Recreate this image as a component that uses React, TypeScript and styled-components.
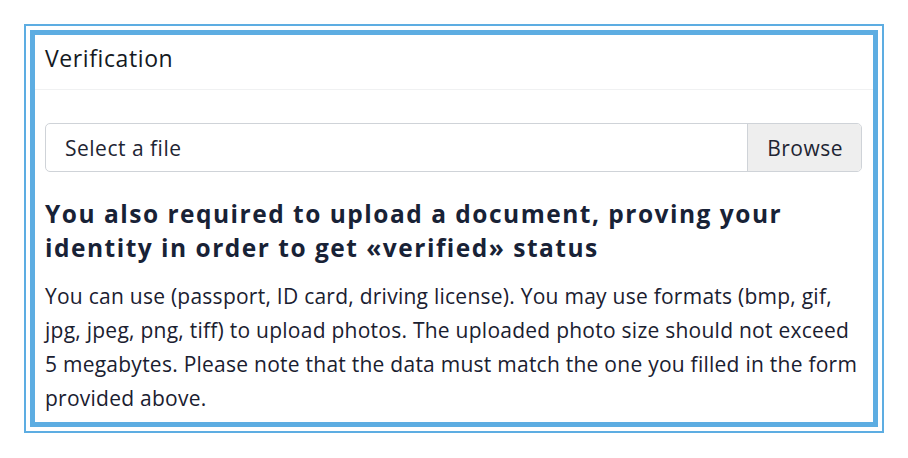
import React from 'react'
import styled, { createGlobalStyle } from 'styled-components'

const GlobalStyle = createGlobalStyle`
  body {
    margin: 0;
    background: #ffffff;
    font-family: 'Open Sans', 'Noto Sans', sans-serif;
    color: #1d2433;
  }
`

const Page = styled.div`
  padding: 30px;
`

const Card = styled.section`
  border: 5px solid #5dade2;
  outline: 2px solid #5dade2;
  outline-offset: 4px;
  background: #ffffff;
`

const CardHeader = styled.header`
  height: 55px;
  box-sizing: border-box;
  padding: 0 10px 9px;
  display: flex;
  align-items: center;
  border-bottom: 1px solid #f0f1f2;
  font-size: 23px;
  letter-spacing: 0.6px;
  color: #141922;
`

const CardBody = styled.div`
  padding: 33px 11px 7px 10px;
`

const FileGroup = styled.label`
  display: flex;
  height: 49px;
  border: 1px solid #cfd3d8;
  border-radius: 5px;
  overflow: hidden;
  box-sizing: border-box;
  font-size: 21px;
  letter-spacing: 0.5px;
  color: #1e2533;
`

const FileName = styled.span`
  flex: 1;
  display: flex;
  align-items: center;
  padding: 0 19px;
`

const BrowseButton = styled.span`
  display: flex;
  align-items: center;
  padding: 0 18px 0 19px;
  background: #eeeeee;
  border-left: 1px solid #cfd3d8;
`

const Title = styled.h2`
  margin: 25px 0 14px;
  font-size: 24.5px;
  line-height: 34px;
  font-weight: 700;
  letter-spacing: 1.5px;
  color: #182236;
`

const Text = styled.p`
  margin: 0;
  font-size: 21px;
  line-height: 34px;
  letter-spacing: 0.25px;
  white-space: nowrap;
  color: #1a2030;
`

export default function App() {
  return (
    <>
      <GlobalStyle />
      <Page>
        <Card>
          <CardHeader>Verification</CardHeader>
          <CardBody>
            <FileGroup>
              <FileName>Select a file</FileName>
              <BrowseButton>Browse</BrowseButton>
            </FileGroup>
            <Title>
              You also required to upload a document, proving your
              <br />
              identity in order to get «verified» status
            </Title>
            <Text>
              You can use (passport, ID card, driving license). You may use formats (bmp, gif,
              <br />
              jpg, jpeg, png, tiff) to upload photos. The uploaded photo size should not exceed
              <br />
              5 megabytes. Please note that the data must match the one you filled in the form
              <br />
              provided above.
            </Text>
          </CardBody>
        </Card>
      </Page>
    </>
  )
}
